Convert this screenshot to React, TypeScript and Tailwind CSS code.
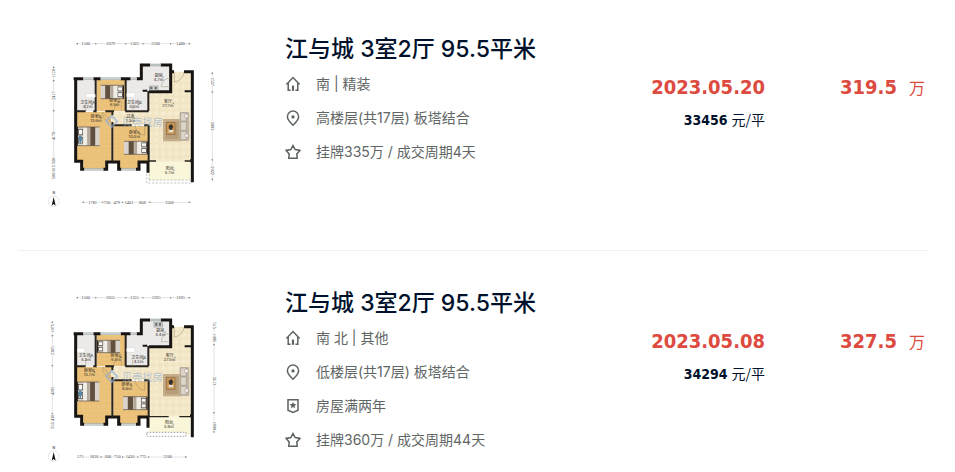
import { ReactNode } from "react";

type IconName = "home" | "pin" | "badge" | "star";

interface Detail {
    icon: IconName;
    text: string;
}

interface Room {
    x: number;
    y: number;
    name: string;
    area: string;
}

interface Plan {
    id: string;
    top: [number, string][];
    bottom: [number, string][];
    left: [number, string][];
    right: [number, string][];
    rooms: Room[];
    second: boolean;
}

interface House {
    id: number;
    title: string;
    date: string;
    unitPrice: string;
    price: string;
    details: Detail[];
    plan: Plan;
}

const houses: House[] = [
    {
        id: 1,
        title: "江与城 3室2厅 95.5平米",
        date: "2023.05.20",
        unitPrice: "33456",
        price: "319.5",
        details: [
            { icon: "home", text: "南 | 精装" },
            { icon: "pin", text: "高楼层(共17层) 板塔结合" },
            { icon: "star", text: "挂牌335万 / 成交周期4天" },
        ],
        plan: {
            id: "a",
            second: false,
            top: [[137, "1500"], [212, "2079"], [283, "1303"], [347, "2200"], [422, "1480"]],
            bottom: [[158, "1781"], [201, "720"], [230, "479"], [267, "1401"], [307, "808"], [388, "3508"]],
            left: [[130, "1120"], [197, "2417"], [318, "4178"], [415, "500 815 500"]],
            right: [[155, "1557"], [288, "5903"], [422, "2022"]],
            rooms: [
                { x: 143, y: 223, name: "卫生间A", area: "4.2㎡" },
                { x: 224, y: 217, name: "卧室C", area: "6.5㎡" },
                { x: 283, y: 223, name: "卫生间B", area: "4.0㎡" },
                { x: 356, y: 141, name: "厨房", area: "4.7㎡" },
                { x: 168, y: 265, name: "卧室B", area: "13.6㎡" },
                { x: 271, y: 264, name: "过道", area: "1.3㎡" },
                { x: 283, y: 312, name: "卧室A", area: "10.0㎡" },
                { x: 384, y: 218, name: "客厅", area: "27.7㎡" },
                { x: 389, y: 421, name: "阳台", area: "5.7㎡" },
            ],
        },
    },
    {
        id: 2,
        title: "江与城 3室2厅 95.5平米",
        date: "2023.05.08",
        unitPrice: "34294",
        price: "327.5",
        details: [
            { icon: "home", text: "南 北 | 其他" },
            { icon: "pin", text: "低楼层(共17层) 板塔结合" },
            { icon: "badge", text: "房屋满两年" },
            { icon: "star", text: "挂牌360万 / 成交周期44天" },
        ],
        plan: {
            id: "b",
            second: true,
            top: [[137, "1500"], [212, "2055"], [283, "1355"], [349, "2265"], [422, "1665"]],
            bottom: [[121, "575"], [162, "1830"], [204, "600"], [232, "750"], [270, "1430"], [309, "775"], [383, "3200"]],
            left: [[130, "1075"], [197, "2385"], [318, "4205"], [410, "555 430"]],
            right: [[122, "515"], [158, "1095"], [288, "5613"], [422, "1800"]],
            rooms: [
                { x: 138, y: 217, name: "卫生间A", area: "4.3㎡" },
                { x: 228, y: 217, name: "卧室C", area: "6.5㎡" },
                { x: 296, y: 221, name: "卫生间B", area: "4.2㎡" },
                { x: 361, y: 141, name: "厨房", area: "4.4㎡" },
                { x: 148, y: 262, name: "卧室B", area: "13.7㎡" },
                { x: 261, y: 303, name: "卧室A", area: "9.8㎡" },
                { x: 389, y: 217, name: "客厅", area: "27.5㎡" },
                { x: 387, y: 418, name: "阳台", area: "5.9㎡" },
            ],
        },
    },
];

const iconPaths: Record<IconName, ReactNode> = {
    home: (
        <>
            <path d="M1.4 8.6 8 1.6l6.6 7" />
            <path d="M3.2 7v7.3h2.4M12.8 7v7.3h-2.4" />
            <path d="M8 9.6v5.2" strokeWidth="2.2" />
        </>
    ),
    pin: (
        <>
            <path d="M8 15.2C4.6 12 2.4 9.6 2.4 6.7a5.6 5.6 0 0 1 11.2 0c0 2.9-2.2 5.3-5.6 8.5z" />
            <circle cx="8" cy="6.9" r=".9" fill="currentColor" />
        </>
    ),
    badge: (
        <>
            <path d="M3 1.8h10v10.4l-5 2.2-5-2.2z" />
            <path
                d="m8 3.9 1 2.2 2.4.2-1.8 1.6.6 2.4L8 9l-2.2 1.3.6-2.4-1.8-1.6 2.4-.2z"
                fill="currentColor"
                stroke="none"
            />
        </>
    ),
    star: <path d="m8 1.6 2.2 3.9 4.6.9-3 3.5.4 4.3H3.8l.4-4.3-3-3.5 4.6-.9z" />,
};

const Icon = ({ name }: { name: IconName }) => (
    <svg
        viewBox="0 0 16 16"
        fill="none"
        stroke="currentColor"
        strokeWidth="1.5"
        className="h-4 w-4 shrink-0 text-[#5c6362]"
        aria-hidden="true"
    >
        {iconPaths[name]}
    </svg>
);

const Bed = ({ x, y, w, h, flip }: { x: number; y: number; w: number; h: number; flip?: boolean }) => (
    <g transform={flip ? `translate(${x + w} ${y}) scale(-1 1)` : `translate(${x} ${y})`}>
        <rect width={w} height={h} fill="#d9d3cc" />
        <rect x="3" y={h * 0.12} width={w * 0.2} height={h * 0.3} fill="#f7f6f4" stroke="#3c322b" strokeWidth="2" />
        <rect x="3" y={h * 0.56} width={w * 0.2} height={h * 0.3} fill="#f7f6f4" stroke="#3c322b" strokeWidth="2" />
        <rect x={w * 0.26} width={w * 0.2} height={h} fill="#f0ece6" />
        <rect x={w * 0.44} width={w * 0.12} height={h} fill="#b3a898" />
        <rect x={w * 0.58} width={w * 0.22} height={h} fill="#62503f" />
        <path d={`M0 0h${w}M0 ${h}h${w}`} stroke="#564a40" strokeWidth="2" />
        <path d={`M0 0v${h}`} stroke="#2b2522" strokeWidth="4" />
    </g>
);

const FloorPlan = ({ plan }: { plan: Plan }) => {
    const { second } = plan;
    const wood = `wood-${plan.id}`;
    const tile = `tile-${plan.id}`;

    return (
        <svg viewBox={second ? "0 -3 570 555" : "0 0 570 555"} className="w-[190px] shrink-0" role="img" aria-label="户型图">
            <defs>
                <pattern id={wood} width="32" height="14" patternUnits="userSpaceOnUse">
                    <rect width="32" height="14" fill="#ecc47c" />
                    <path d="M0 0h32M0 7h32M10 0v7M26 7v7" stroke="#e3b467" strokeWidth="1" />
                </pattern>
                <pattern id={tile} width="20" height="20" patternUnits="userSpaceOnUse">
                    <rect width="20" height="20" fill="#f2e5c4" />
                    <path d="M0 10 10 0l10 10-10 10z" fill="#f5ebcf" stroke="#eee0bc" />
                </pattern>
            </defs>

            {/* floors */}
            <path d="M327 183h62v-58h66v270H327z" fill={`url(#${tile})`} />
            <path d="M216 246h114v40H216z" fill={`url(#${tile})`} />
            <path d="M327 395h124v55H327z" fill="#faf6da" />
            <path d="M108 150h58v94h-58zM258 150h66v94h-66zM308 108h84v74h-84z" fill="#ebeae8" />
            <path d="M170 150h86v94h-86zM108 246h106v148h-18v24h-66v-24h-22zM220 288h104v106h-30v24h-54v-24h-20z" fill={`url(#${wood})`} />

            {/* walls */}
            <g fill="none" stroke="#171411" strokeWidth="9">
                <path d="M107 143v251h18v24h8M190 418h10v-22h36v22h8M288 418h9v-22h27v32M101 146h29M160 146h22M242 146h30M290 146h14v-41h26M362 105h30v80h-65" />
                <path d="M390 125h12M432 125h25v332M450 392h8" strokeWidth="9" />
                <path d="M308 182h14M434 184h23" strokeWidth="6" />
            </g>
            <g fill="none" stroke="#29231e" strokeWidth="6">
                <path d="M167 150v94M257 150v94M107 244h30M160 244h10M196 244h26M256 244h70M325 183v60M217 244v12M217 276v120M217 286h58M312 286h14M326 285v110" />
                {second ? <path d="M326 395h60M418 395h36" strokeWidth="4" /> : <path d="M326 393h22M434 393h22" strokeWidth="5" />}
            </g>

            {/* windows */}
            <g stroke="#9ca6a6" strokeWidth="7">
                <path d="M130 146h30M182 146h60M272 146h18M330 105h32M133 418h57M244 418h44" />
            </g>
            <path d="M130 146h30M182 146h60M272 146h18M330 105h32M133 418h57M244 418h44" stroke="#eef2f1" strokeWidth="2" />
            {second ? (
                <path d="M320 442h118v12H320z" fill="#fff" stroke="#777" strokeWidth="2" strokeDasharray="5 4" />
            ) : (
                <path d="M320 431v28h134M326 450h128M328 431v20" fill="none" stroke="#aaa" strokeWidth="2" strokeDasharray="7 4" />
            )}

            {/* doors */}
            <g fill="none" stroke="#a18f70" strokeWidth="1.5">
                <path d="M403 126v30c16-2 27-14 29-30M364 170h26M364 170c0-14 10-24 26-26M188 246c0 20 10 30 27 32M188 246l27 32M286 288c2 16 12 26 28 27v-27M244 244v-30c-14 2-20 14-22 28M137 244v-24M278 244v-20" />
            </g>

            {/* furniture */}
            {second ? (
                <>
                    <Bed x={172} y={166} w={68} h={37} />
                    <Bed x={112} y={291} w={66} h={57} />
                    <Bed x={249} y={335} w={72} h={39} flip />
                </>
            ) : (
                <>
                    <Bed x={182} y={166} w={68} h={40} flip />
                    <Bed x={112} y={291} w={67} h={56} />
                    <Bed x={252} y={334} w={70} h={39} flip />
                </>
            )}
            <path d="M114 323l6-9 8 9-7 20z" fill="#5c87a3" />
            <rect x="369" y="267" width="54" height="67" fill="#c5ad89" />
            <rect x="376" y="274" width="40" height="53" fill="#b79e7b" />
            <rect x="379" y="277" width="26" height="36" fill="#c99755" stroke="#8d683c" strokeWidth="2" />
            <path d="m386 287 9-5 5 9-6 10-7-5z" fill="#39332e" />
            <rect x="386" y="300" width="14" height="7" fill="#e5ddcf" />
            <rect x="419" y="246" width="29" height="87" rx="3" fill="#c0b5a7" />
            <path d="M422 249h17v24h-17zM422 276h17v25h-17zM422 304h17v25h-17z" fill="#ddd5ca" stroke="#9b8d7e" strokeWidth="1.5" />
            <path d="m433 256 9-5 4 9-9 5zM434 314l9-4 3 9-8 5z" fill="#f3efe9" stroke="#807468" />
            <g fill="#e1e4e2" stroke="#777b79" strokeWidth="1.5">
                {second ? <rect x="342" y="112" width="26" height="14" /> : <rect x="328" y="168" width="26" height="12" />}
                {second ? (
                    <path d="M346 115h6v7h-6zM357 115h6v7h-6z" fill="#666" />
                ) : (
                    <path d="M331 171h6v6h-6zM344 171h6v6h-6z" fill="#666" />
                )}
            </g>
            <g fill="#fff" stroke="#c7c7c4" strokeWidth="1">
                {second ? <rect x="112" y="190" width="22" height="13" rx="4" /> : <rect x="138" y="191" width="28" height="12" rx="4" />}
                <rect x="260" y="188" width="25" height="14" rx="4" />
            </g>

            {/* watermark */}
            <g opacity=".6">
                <path d="m215 258 17 16-17 17-17-17z" fill="none" stroke="#8fb0dc" strokeWidth="6" strokeLinejoin="round" />
                <text x="245" y="288" fontSize="31" fill="#8fabd0">
                    贝壳找房
                </text>
            </g>

            {/* room labels */}
            <g fontSize="12" fill="#2d2822" textAnchor="middle">
                {plan.rooms.map((room) => (
                    <g key={room.name}>
                        <text x={room.x} y={room.y}>
                            {room.name}
                        </text>
                        <text x={room.x} y={room.y + 12}>
                            {room.area}
                        </text>
                    </g>
                ))}
            </g>

            {/* dimensions */}
            <g stroke="#c4c4c4" strokeWidth="1.5">
                <path d={second ? "M108 38h344" : "M108 41h344"} />
                <path d={second ? "M113 516h328" : "M126 517h326"} />
                <path d={second ? "M37 110v322" : "M41 108v340"} />
                <path d={second ? "M522 110v335" : "M517 126v326"} />
            </g>
            <g fill="#888">
                <path
                    transform={second ? "translate(0 -3)" : undefined}
                    d="m108 41 6-3v6zM452 41l-6-3v6zM166 38l5 3-5 3zM256 38l5 3-5 3zM308 38l5 3-5 3zM390 38l5 3-5 3z"
                />
                {second ? (
                    <path d="M441 516l-6-3v6zM182 513l5 3-5 3zM246 513l5 3-5 3zM292 513l5 3-5 3zM324 513l5 3-5 3z" />
                ) : (
                    <path d="m126 517 6-3v6zM452 517l-6-3v6zM186 514l5 3-5 3zM246 514l5 3-5 3zM328 514l5 3-5 3z" />
                )}
                <path
                    transform={second ? "translate(-4 0)" : undefined}
                    d="m41 108 3 6h-6zM38 150h6l-3 6zM38 240l3 6 3-6zM38 385l3 6 3-6z"
                />
                <path
                    transform={second ? "translate(5 -7)" : undefined}
                    d="m517 126 3 6h-6zM517 452l3-6h-6zM514 184l3 6 3-6zM514 388l3 6 3-6z"
                />
            </g>
            <g
                fontSize="13"
                fill="#3d3d3d"
                stroke="#fff"
                strokeWidth="4"
                paintOrder="stroke"
                textAnchor="middle"
                className="font-['Liberation_Serif',serif]"
            >
                {plan.top.map(([pos, label]) => (
                    <text key={pos} x={pos} y={second ? 42 : 45}>
                        {label}
                    </text>
                ))}
                {plan.bottom.map(([pos, label]) => (
                    <text key={pos} x={pos} y={second ? 520 : 521}>
                        {label}
                    </text>
                ))}
                {plan.left.map(([pos, label]) => (
                    <text key={pos} transform={`translate(${second ? 41 : 45} ${pos}) rotate(-90)`}>
                        {label}
                    </text>
                ))}
                {plan.right.map(([pos, label]) => (
                    <text key={pos} transform={`translate(${second ? 518 : 513} ${pos}) rotate(90)`}>
                        {label}
                    </text>
                ))}
            </g>

            {/* compass */}
            <circle cx="41" cy="514" r="16" fill="#fff" stroke="#ccc" strokeWidth="1.5" />
            <path d="m41 501 6 26-6-5-6 5z" fill="#111" />
            <text x="41" y="492" fontSize="10" fontWeight="700" fill="#666" textAnchor="middle">
                N
            </text>
        </svg>
    );
};

const HouseItem = ({ house }: { house: House }) => (
    <li className="flex items-start border-b border-[#f1f1f1] pt-[38px] pb-[35px] pl-[22px] first:pt-[35px] last:border-b-0 last:pb-0">
        <div className="-mt-[5px]">
            <FloorPlan plan={house.plan} />
        </div>
        <div className="ml-[55px] min-w-0 flex-1">
            <h2 className="mb-[11px] text-[23px] leading-7 font-medium whitespace-nowrap text-[#00112c]">{house.title}</h2>
            <ul className="flex flex-col gap-[14px]">
                {house.details.map((detail) => (
                    <li key={detail.icon} className="flex h-5 items-center gap-[15px] text-sm leading-5 whitespace-nowrap text-[#616665]">
                        <Icon name={detail.icon} />
                        <span>{detail.text}</span>
                    </li>
                ))}
            </ul>
        </div>
        <div className="mt-[38px] text-right font-['DejaVu_Sans_Condensed','Noto_Sans_CJK_SC',sans-serif] whitespace-nowrap">
            <p className="text-xl leading-7 font-bold text-[#dd4b40]">{house.date}</p>
            <p className="mt-1 text-sm leading-7 text-[#00112c]">
                <strong>{house.unitPrice}</strong> <span className="font-['Noto_Sans_CJK_SC',sans-serif]">元/平</span>
            </p>
        </div>
        <p className="mt-[38px] mr-[3px] flex w-40 items-baseline justify-end gap-3 font-['DejaVu_Sans_Condensed','Noto_Sans_CJK_SC',sans-serif] text-xl leading-7 font-bold whitespace-nowrap text-[#dd4b40]">
            {house.price}
            <span className="text-base font-normal">万</span>
        </p>
    </li>
);

const App = () => {
    return (
        <main className="min-h-screen bg-white pr-[27px] pl-[18px] font-['Inter','Noto_Sans_CJK_SC',sans-serif]">
            <ul>
                {houses.map((house) => (
                    <HouseItem key={house.id} house={house} />
                ))}
            </ul>
        </main>
    );
};

export default App;
